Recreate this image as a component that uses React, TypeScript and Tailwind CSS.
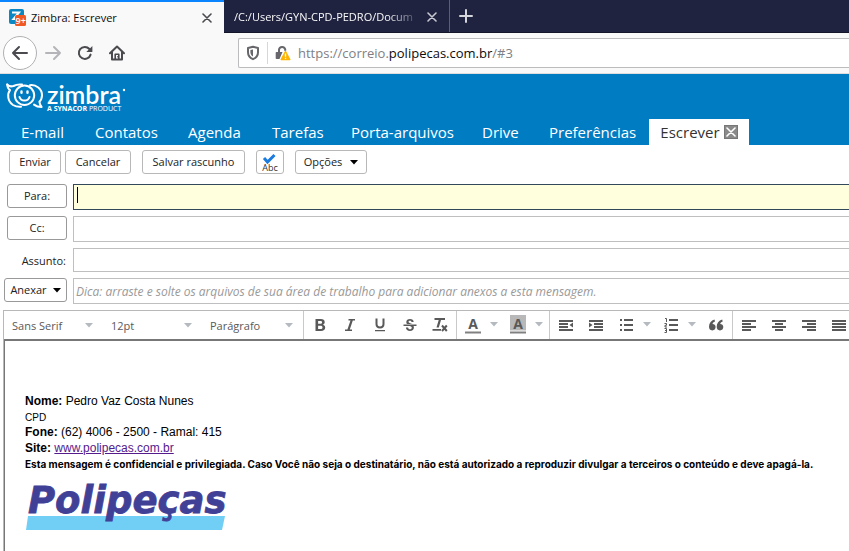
import React from 'react';

const BackIcon = () => (
  <svg width="18" height="16" viewBox="0 0 18 16" fill="none" stroke="#4a4a4f" strokeWidth="2" strokeLinecap="round" strokeLinejoin="round">
    <path d="M16 8H2M8 2 2 8l6 6" />
  </svg>
);

const ForwardIcon = () => (
  <svg width="18" height="16" viewBox="0 0 18 16" fill="none" stroke="#b5b5b9" strokeWidth="2" strokeLinecap="round" strokeLinejoin="round">
    <path d="M2 8h14M10 2l6 6-6 6" />
  </svg>
);

const ReloadIcon = () => (
  <svg width="16" height="16" viewBox="0 0 16 16" fill="none">
    <path d="M13.6 9.6A6 6 0 1 1 12.4 4" stroke="#4a4a4f" strokeWidth="2" strokeLinecap="round" />
    <path d="M15.4 1v5.6a.5.5 0 0 1-.5.5H9.3z" fill="#4a4a4f" />
  </svg>
);

const HomeIcon = () => (
  <svg width="16" height="16" viewBox="0 0 16 16" fill="none" stroke="#4a4a4f" strokeWidth="2" strokeLinecap="round" strokeLinejoin="round">
    <path d="M1 8.2 8 1.5l7 6.7M3 7v7.6h10V7" />
    <path d="M6.2 14V9.2h3.6V14" strokeWidth="1.6" />
    <path d="M8.6 11.6v.4" strokeWidth="1" />
  </svg>
);

const ShieldIcon = () => (
  <svg width="14" height="16" viewBox="0 0 14 16" fill="none">
    <path d="M7 1.8 12 3v4.2c0 3.2-1.8 5.6-5 7-3.2-1.4-5-3.8-5-7V3z" stroke="#66666b" strokeWidth="2" strokeLinejoin="round" />
    <path d="M7 4.4v7.2C5.2 10.4 4.4 9 4.4 7V5z" fill="#66666b" />
  </svg>
);

const LockWarningIcon = () => (
  <svg width="16" height="16" viewBox="0 0 16 16" fill="none">
    <path d="M4 8V4.6a3.2 3.2 0 0 1 6.2-.4v1.5" stroke="#66666b" strokeWidth="2" />
    <path d="M1.5 7h6L4.5 14h-3a.8.8 0 0 1-.8-.8V7.8a.8.8 0 0 1 .8-.8z" fill="#66666b" />
    <path d="M10.5 6.5 14.8 14.5H6.2z" fill="#ffb400" stroke="#ffb400" strokeWidth="1.4" strokeLinejoin="round" />
    <path d="M10.5 8.5v3.2M10.5 12.8v1.2" stroke="#fff" strokeWidth="1.3" />
  </svg>
);

const CloseIcon = ({ color }: { color: string }) => (
  <svg width="10" height="10" viewBox="0 0 10 10" fill="none" stroke={color} strokeWidth="1.6" strokeLinecap="round">
    <path d="m1 1 8 8M9 1 1 9" />
  </svg>
);

const Favicon = () => (
  <svg width="17" height="17" viewBox="0 0 17 17" aria-hidden="true" className="overflow-visible">
    <rect width="15" height="15" rx="2" fill="#0b87c3" />
    <path d="M3 3.5h7L4.5 10H8" fill="none" stroke="#fff" strokeWidth="2" />
    <rect x="6" y="6" width="11" height="11" rx="1.5" fill="#f05a22" />
    <text x="6.5" y="15" fontSize="9" fill="#fff" fontFamily="Open Sans" fontWeight="600">9+</text>
  </svg>
);

const ZimbraLogo = () => (
  <svg width="122" height="30" viewBox="0 0 122 30" role="img" aria-label="Zimbra" className="overflow-visible">
    <g fill="none" stroke="#fff" strokeLinejoin="round" strokeLinecap="round">
      <g strokeWidth="2">
        <path d="M1.2 1.5C3 3.5 5 3.8 7.5 3 10 1.7 13 1.2 16 1.6" />
        <path d="M1.2 1.5C1.5 4.5 2.5 6.2 4 7.2 1 11 1.5 18.5 7 22c2.5 1.5 5 2 8 1.8" />
        <circle cx="18.5" cy="12.3" r="9.7" />
        <path d="M24 2.2c6-.8 12 3.6 12 10 0 2.8-1 5-2.6 6.5.2 2 1 4 2.200 5.300-3 0-5.600-.8-7.600-2.400" />
      </g>
      <path d="M13.500 14c1.600 4.800 8.400 4.800 10 0" strokeWidth="2" />
      <path d="M15.500 8.500v1.200M21.500 8.500v1.200" strokeWidth="2.400" />
    </g>
    <text x="41" y="21" fontSize="25" fontWeight="600" fill="#fff" fontFamily="Lato, sans-serif">zimbra</text>
    <circle cx="118" cy="7" r="1.2" fill="#fff" />
    <text x="41" y="28" fontSize="7" fontWeight="700" fill="#fff" fontFamily="Open Sans, sans-serif">
      A SYNACOR <tspan fontWeight="400">PRODUCT</tspan>
    </text>
  </svg>
);

const Caret = ({ color }: { color: string }) => (
  <svg width="8" height="5" viewBox="0 0 8 5" aria-hidden="true">
    <path d="M0 0h8L4 4.5z" fill={color} />
  </svg>
);

const navTabs = [
  { label: 'E-mail', width: 'w-[74px]' },
  { label: 'Contatos', width: 'w-[93px]' },
  { label: 'Agenda', width: 'w-[84px]' },
  { label: 'Tarefas', width: 'w-[79px]' },
  { label: 'Porta-arquivos', width: 'w-[131px]' },
  { label: 'Drive', width: 'w-[67px]' },
  { label: 'Preferências', width: 'w-[100px]' },
];

const actionClass =
  'h-6 shrink-0 rounded-[3px] border border-[#b8b8b8] bg-white pt-px text-[11px] text-[#222] flex items-center justify-center';
const fieldButtonClass =
  'h-6 rounded-[3px] border border-[#999] bg-white pt-px text-[11px] text-[#222] flex items-center justify-center';
const fieldClass = 'min-w-0 flex-1 border border-r-0 border-[#bfbfbf] bg-white pt-0.5 text-xs outline-none';

const FormatSelect = ({ label, value, width }: { label: string; value: string; width: string }) => (
  <label className={`relative block h-full shrink-0 ${width}`}>
    <select aria-label={label} className="h-full w-full appearance-none bg-transparent pl-2 pt-0.5 text-[11px] text-[#595959] outline-none">
      <option>{value}</option>
    </select>
    <span className="pointer-events-none absolute right-2.5 top-3 flex">
      <Caret color="#b4bac0" />
    </span>
  </label>
);

const Group = ({ children }: { children: React.ReactNode }) => (
  <div className="flex h-full shrink-0 border-l border-[#c9c9c9] px-px">{children}</div>
);

const Tool = ({ label, children }: { label: string; children: React.ReactNode }) => (
  <button type="button" aria-label={label} className="flex h-full w-[30px] items-center justify-center">
    <svg width="16" height="16" viewBox="0 0 16 16" fill="#595959" stroke="none" className="overflow-visible">
      {children}
    </svg>
  </button>
);

const More = ({ label }: { label: string }) => (
  <button type="button" aria-label={label} className="flex h-full w-[15px] items-center pb-0.5 pl-0.5">
    <Caret color="#b4bac0" />
  </button>
);

const ColorLetter = () => (
  <text x="8" y="12" fontFamily="Open Sans, Noto Sans, sans-serif" fontWeight="700" fontSize="14" textAnchor="middle">A</text>
);

export default function App() {
  return (
    <div className='flex min-h-screen flex-col overflow-hidden bg-white font-["Open_Sans","Noto_Sans",sans-serif]'>
      {/* Browser tabs */}
      <div className="flex h-[33px] border-b border-[#15152a] bg-[#202340]">
        <div className="-mb-px flex w-56 shrink-0 items-center border-t-2 border-[#0a84ff] bg-[#f9f9fa] pl-[9px] pr-3">
          <Favicon />
          <span className="ml-[5px] flex-1 pt-px text-[11px] text-[#0c0c0d]">Zimbra: Escrever</span>
          <button type="button" aria-label="Fechar aba"><CloseIcon color="#4a4a4f" /></button>
        </div>
        <div className="flex w-[226px] shrink-0 items-center border-r border-[#5c5e74] pl-2.5 pr-3 pt-0.5">
          <span className="min-w-0 flex-1 overflow-hidden whitespace-nowrap pt-px text-[11px] text-[#f9f9fa] [mask-image:linear-gradient(to_right,black_82%,transparent)]">
            /C:/Users/GYN-CPD-PEDRO/Docum
          </span>
          <button type="button" aria-label="Fechar aba" className="ml-1.5"><CloseIcon color="#c8c8d0" /></button>
        </div>
        <button type="button" aria-label="Nova aba" className="flex w-8 items-center justify-center">
          <svg width="14" height="14" viewBox="0 0 14 14" stroke="#d5d5dc" strokeWidth="2" strokeLinecap="round">
            <path d="M7 1v12M1 7h12" />
          </svg>
        </button>
      </div>

      {/* Address bar */}
      <div className="flex h-[41px] items-center border-b border-[#dededf] bg-[#f9f9fa] pl-[3px]">
        <button type="button" aria-label="Voltar" className="flex size-[34px] shrink-0 items-center justify-center rounded-full border border-[#b1b1b3] bg-white">
          <BackIcon />
        </button>
        <button type="button" aria-label="Avançar" className="ml-[7px] shrink-0"><ForwardIcon /></button>
        <button type="button" aria-label="Recarregar" className="ml-[15px] shrink-0"><ReloadIcon /></button>
        <button type="button" aria-label="Início" className="ml-4 shrink-0"><HomeIcon /></button>
        <div className="ml-[113px] flex h-[30px] flex-1 items-center rounded-l-[2px] border border-r-0 border-[#bcbcbe] bg-white pl-[7px]">
          <ShieldIcon />
          <span className="ml-[7px] h-[22px] w-px bg-[#d7d7db]" />
          <span className="ml-[7px]"><LockWarningIcon /></span>
          <div role="textbox" aria-label="Endereço" tabIndex={0} className="ml-[7px] whitespace-nowrap pt-0.5 text-[13px] text-[#808084] outline-none">
            https://correio.<span className="text-[#0c0c0d]">polipecas.com.br</span>/#3
          </div>
        </div>
      </div>

      {/* Application header */}
      <header className="flex h-[71px] flex-col justify-between bg-[#007cc3]">
        <div className="pl-[6px] pt-[9px]"><ZimbraLogo /></div>
        <nav className="flex h-[26px] shrink-0 items-center overflow-hidden pl-[21px] text-[15px] leading-[26px] text-white">
          {navTabs.map((tab) => (
            <a key={tab.label} href="#" className={`shrink-0 whitespace-nowrap ${tab.width}`}>{tab.label}</a>
          ))}
          <div className="flex h-full w-[100px] shrink-0 items-center justify-center gap-1 bg-white text-[#333]">
            <a href="#" aria-current="page">Escrever</a>
            <button type="button" aria-label="Fechar Escrever" className="flex size-3.5 items-center justify-center border border-[#777] bg-[#8a8a8a]">
              <CloseIcon color="#fff" />
            </button>
          </div>
        </nav>
      </header>

      {/* Message actions */}
      <div className="flex pl-[9px] pt-[5px]">
        <button type="button" className={`${actionClass} w-[52px]`}>Enviar</button>
        <button type="button" className={`${actionClass} ml-1 w-[66px]`}>Cancelar</button>
        <button type="button" className={`${actionClass} ml-[11px] w-[103px]`}>Salvar rascunho</button>
        <button type="button" aria-label="Verificar ortografia" className={`${actionClass} ml-[11px] w-7`}>
          <svg width="18" height="18" viewBox="0 0 18 18" className="overflow-visible">
            <path d="M3 4 6.500 8l7-7" fill="none" stroke="#1a7be0" strokeWidth="3" />
            <text x="9" y="17" fontSize="9" textAnchor="middle" fill="#333" fontFamily="Open Sans">Abc</text>
          </svg>
        </button>
        <button type="button" className={`${actionClass} ml-[11px] w-[72px] gap-2`}>Opções <Caret color="#000" /></button>
      </div>

      {/* Recipients */}
      <div className="mt-2.5 flex flex-col gap-1.5">
        <div className="flex">
          <button type="button" className={`${fieldButtonClass} ml-[7px] mr-1.5 w-[60px]`}>Para:</button>
          <div className="relative flex h-[26px] flex-1">
            <input aria-label="Para" className="min-w-0 flex-1 border border-r-0 border-[#31495a] bg-[#ffffdd] px-1 text-xs outline-none" />
            <span className="absolute left-1 top-[3px] h-4 w-px bg-black" />
          </div>
        </div>
        <div className="flex h-[26px]">
          <button type="button" className={`${fieldButtonClass} ml-[7px] mr-1.5 w-[60px]`}>Cc:</button>
          <input aria-label="Cc" className={`${fieldClass} px-0.5`} />
        </div>
        <div className="flex h-6">
          <label htmlFor="subject" className="w-[73px] pr-[7px] pt-px text-right text-[11px] leading-6 text-[#222]">Assunto:</label>
          <input id="subject" className={`${fieldClass} px-0.5`} />
        </div>
        <div className="flex h-[26px]">
          <button type="button" className={`${fieldButtonClass} ml-1 mr-1.5 w-[63px] gap-1.5`}>Anexar <Caret color="#000" /></button>
          <input
            aria-label="Anexos"
            placeholder="Dica: arraste e solte os arquivos de sua área de trabalho para adicionar anexos a esta mensagem."
            className={`${fieldClass} px-0.5 italic placeholder:text-[#999]`}
          />
        </div>
      </div>

      {/* Editor */}
      <div className="ml-[3px] mt-1.5 flex flex-1 flex-col border-l border-t border-[#b8b8b8]">
        <div className="flex h-7 overflow-hidden">
          <FormatSelect label="Fonte" value="Sans Serif" width="w-[99px]" />
          <FormatSelect label="Tamanho" value="12pt" width="w-[99px]" />
          <FormatSelect label="Formato" value="Parágrafo" width="w-[101px]" />
          <Group>
            <Tool label="Negrito"><path fillRule="evenodd" d="M3.5 2h5.3c2.5 0 3.9 1.2 3.9 3.1 0 1.3-.7 2.2-1.7 2.6 1.4.4 2.2 1.4 2.2 2.9 0 2.1-1.6 3.4-4.2 3.4H3.5zm2.6 2v2.8h2c1.3 0 2-.5 2-1.4s-.7-1.4-2-1.4zm0 4.8V12h2.3c1.4 0 2.1-.6 2.1-1.6s-.7-1.6-2.1-1.6z" /></Tool>
            <Tool label="Itálico"><path d="M6.500 2H13v1.600h-2.200L7.800 12.400H10V14H3v-1.600h2.400L8.500 3.600h-2z" /></Tool>
            <Tool label="Sublinhado"><path d="M3.5 1.5h2v5.300c0 1.900.8 2.700 2.500 2.700s2.500-.8 2.500-2.700V1.500h2V7c0 2.800-1.500 4.500-4.500 4.500S3.500 9.800 3.500 7zM3 13h10v1.200H3z" /></Tool>
            <Tool label="Tachado"><path d="M11.700 5H9.500c-.1-.9-.6-1.300-1.500-1.300s-1.500.4-1.500 1.100c0 .9 1 1.200 2.200 1.600l1.800.6H5C4.500 6.400 4.300 5.700 4.300 4.900 4.300 3.100 5.800 2 8 2s3.600 1.100 3.700 3zM1.500 7.500h13V9H11.600c.2.400.3.900.3 1.400 0 2.100-1.500 3.600-3.900 3.600-2.500 0-4-1.300-4.100-3.500h2.200c.1 1.200.8 1.800 1.900 1.800s1.800-.6 1.800-1.500c0-.8-.5-1.300-1.800-1.800H1.500z" /></Tool>
            <Tool label="Limpar formatação"><path d="M2.500 1h10.500v2H9L6.800 10.500H4.500L6.700 3H2.500zM.5 12h8.500v1.800H.5z" /><path d="m10 8.500 4.800 5.500m0-5.500L10 14" stroke="#595959" strokeWidth="2" /></Tool>
          </Group>
          <Group>
            <Tool label="Cor do texto"><ColorLetter /><path d="M0 14.500h16v2H0z" fill="#808080" /></Tool>
            <More label="Cores do texto" />
            <Tool label="Cor de fundo"><path d="M0-2h16v15.500H0z" fill="#b8b8b8" /><ColorLetter /><path d="M0 14.500h16v2H0z" fill="#808080" /></Tool>
            <More label="Cores de fundo" />
          </Group>
          <Group>
            <Tool label="Diminuir recuo"><path d="M1 3h14v2H1zM1 6h9v2H1zM1 9h9v2H1zM1 12h14v2H1zM15 5.5v5L11.5 8z" /></Tool>
            <Tool label="Aumentar recuo"><path d="M1 3h14v2H1zM6 6h9v2H6zM6 9h9v2H6zM1 12h14v2H1zM1 5.5v5L4.5 8z" /></Tool>
            <Tool label="Lista"><path d="M2 2h2v2H2zM6 2h9v2H6zM2 7h2v2H2zM6 7h9v2H6zM2 12h2v2H2zM6 12h9v2H6z" /></Tool>
            <More label="Estilos de lista" />
            <Tool label="Lista numerada">
              <path d="M6 2h9v2H6zM6 7h9v2H6zM6 12h9v2H6z" />
              <path d="M2 1.5h1.5V5M1.500 6.500h2V8.300H2V10h2M1.500 11.500h2v4h-2M2 13.500h1.500" fill="none" stroke="#595959" />
            </Tool>
            <More label="Estilos de numeração" />
            <Tool label="Citação"><path d="M6.500 2.500C3 3.500 1 6.300 1 9.800c0 2.300 1.200 3.600 3.300 3.600s3.300-1.300 3.300-3.300-1.300-3.100-3.100-3.100c.2-1.100 1-2 2.500-2.500zM14.200 2.500C10.700 3.500 8.700 6.300 8.700 9.800c0 2.300 1.200 3.600 3.300 3.600s3.300-1.300 3.300-3.300S14 7 12.200 7c.2-1.100 1-2 2.500-2.500z" /></Tool>
          </Group>
          <Group>
            <Tool label="Alinhar à esquerda"><path d="M1 3h14v2H1zM1 6h9v2H1zM1 9h14v2H1zM1 12h9v2H1z" /></Tool>
            <Tool label="Centralizar"><path d="M1 3h14v2H1zM4 6h8v2H4zM1 9h14v2H1zM4 12h8v2H4z" /></Tool>
            <Tool label="Alinhar à direita"><path d="M1 3h14v2H1zM6 6h9v2H6zM1 9h14v2H1zM6 12h9v2H6z" /></Tool>
            <Tool label="Justificar"><path d="M1 3h14v2H1zM1 6h14v2H1zM1 9h14v2H1zM1 12h14v2H1z" /></Tool>
          </Group>
        </div>
        <div className='flex-1 border-l border-t-2 border-[#777] pl-5 pt-[52px] font-["Liberation_Sans",Arial,sans-serif] text-xs leading-4 text-black'>
          <p><b>Nome:</b> Pedro Vaz Costa Nunes</p>
          <p className="pt-0.5 text-[10px] leading-[13px]">CPD</p>
          <p><b>Fone:</b> (62) 4006 - 2500 - Ramal: 415</p>
          <p><b>Site:</b> <a href="#" className="text-[#551a8b] underline">www.polipecas.com.br</a></p>
          <p className='whitespace-nowrap font-["Inter","Liberation_Sans",sans-serif] text-[10px] font-bold'>
            Esta mensagem é confidencial e privilegiada. Caso Você não seja o destinatário, não está autorizado a reproduzir divulgar a terceiros o conteúdo e deve apagá-la.
          </p>
          <svg width="206" height="48" viewBox="0 0 206 48" className="mt-3 overflow-visible" role="img" aria-label="Polipeças">
            <path d="M3 32h197l-3 14H1z" fill="#71cff5" />
            <text x="3" y="29" fontSize="37" fontWeight="700" fontStyle="italic" fill="#3f4096" stroke="#3f4096" strokeWidth="0.8" fontFamily="Verdana, 'DejaVu Sans', sans-serif">Polipeças</text>
          </svg>
        </div>
      </div>
    </div>
  );
}
